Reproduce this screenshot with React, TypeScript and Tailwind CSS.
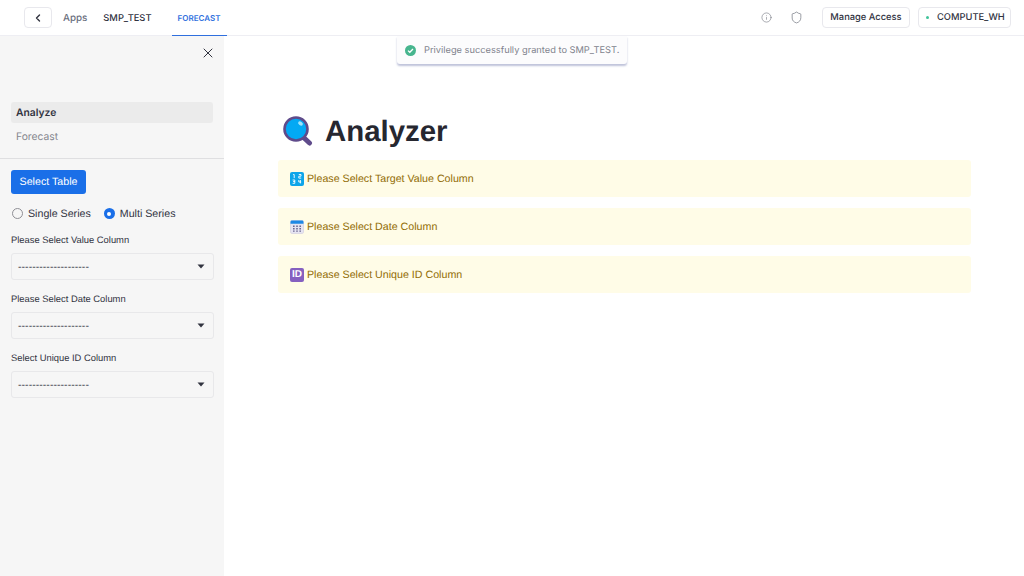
import React from "react";
import { ChevronLeft, X, Info, Shield } from "lucide-react";

const Arial = "font-['Liberation_Sans',Arial,sans-serif]";

function Caret() {
  return (
    <svg width="8" height="5" viewBox="0 0 8 5" className="shrink-0">
      <path d="M0.5 0.5h7L4 4.5z" fill="#31333f" />
    </svg>
  );
}

function SelectField({ label, pt }: { label: string; pt: string }) {
  return (
    <div className={pt}>
      <div className="h-[14px] text-[9.4px] leading-[14px] text-[#31333f]">{label}</div>
      <div className="mt-[6px] flex h-[27px] w-[203px] items-center justify-between rounded-[3px] border border-[#e8e8ea] bg-[#f6f6f6] pl-[6px] pr-[8px]">
        <span className="pt-[2px] text-[10.5px] tracking-[0.05px] text-[#31333f]">--------------------</span>
        <Caret />
      </div>
    </div>
  );
}

function Radio({ checked, label }: { checked?: boolean; label: string }) {
  return (
    <div className="flex items-center gap-[5px]">
      {checked ? (
        <span className="flex h-[11px] w-[11px] items-center justify-center rounded-full bg-[#1a6fe8]">
          <span className="h-[4px] w-[4px] rounded-full bg-white" />
        </span>
      ) : (
        <span className="h-[11px] w-[11px] rounded-full border border-[#8f8f95] bg-[#f6f6f6]" />
      )}
      <span className="text-[10.67px] leading-[14px] text-[#31333f]">{label}</span>
    </div>
  );
}

function Magnifier() {
  return (
    <svg width="30" height="30" viewBox="0 0 30 30" className="shrink-0">
      <path d="M19 20l7.5 7" stroke="#5f4b8b" strokeWidth="5" strokeLinecap="round" />
      <circle cx="13" cy="13" r="11.5" fill="#03a9f4" stroke="#5f4b8b" strokeWidth="2.6" />
      <ellipse cx="17.5" cy="7.5" rx="2.6" ry="1.8" fill="#9fe2fb" transform="rotate(35 17.5 7.5)" />
    </svg>
  );
}

function NumIcon() {
  return (
    <span className="flex h-[14px] w-[14px] shrink-0 items-center justify-center rounded-[2px] bg-[#0ea5e9]">
      <svg width="14" height="14" viewBox="0 0 14 14">
        <path d="M3.2 2.5h1v3.6M8.8 2.5h2.2v1.7H8.8v1.9h2.4M2.6 8h2.2v1.5H3.4h1.4v1.8H2.6M8.8 8v2h2.4M10.4 8v3.4" stroke="#fff" strokeWidth="0.9" fill="none" />
      </svg>
    </span>
  );
}

function CalIcon() {
  return (
    <svg width="14" height="14" viewBox="0 0 14 14" className="shrink-0">
      <rect x="0.5" y="0.5" width="13" height="13" rx="1.4" fill="#e6e4f2" stroke="#c9c5dd" strokeWidth="0.5" />
      <path d="M0.5 3.8V1.9A1.4 1.4 0 0 1 1.9 0.5h10.2a1.4 1.4 0 0 1 1.4 1.4v1.9z" fill="#1e88e5" />
      <path d="M3 5.6h1.6v1.4H3zM6.2 5.6h1.6v1.4H6.2zM9.4 5.6H11v1.4H9.4zM3 8h1.6v1.4H3zM6.2 8h1.6v1.4H6.2zM9.4 8H11v1.4H9.4zM3 10.4h1.6v1.4H3zM6.2 10.4h1.6v1.4H6.2zM9.4 10.4H11v1.4H9.4z" fill="#6b6790" />
    </svg>
  );
}

function IdIcon() {
  return (
    <span className={`flex h-[14px] w-[14px] shrink-0 items-center justify-center rounded-[2px] bg-[#8560c0] text-[10px] font-bold leading-none text-white ${Arial}`}>
      ID
    </span>
  );
}

function Alert({ icon, text, mt }: { icon: React.ReactNode; text: string; mt?: string }) {
  return (
    <div className={`flex h-[37px] items-center gap-[3px] rounded-[3px] bg-[#fffce7] pl-[12px] ${mt ?? ""}`}>
      {icon}
      <span className="text-[10.67px] leading-[14px] text-[#926c05]">{text}</span>
    </div>
  );
}

export default function App() {
  return (
    <div className="relative flex h-[576px] w-[1024px] flex-col overflow-hidden bg-white font-['Inter',sans-serif] [text-rendering:geometricPrecision]">
      <header className="flex h-[36px] shrink-0 items-stretch border-b border-[#eeeef3] bg-white">
        <div className="ml-[24px] mt-[7px] flex h-[21px] w-[28px] items-center justify-center rounded-[4px] border border-[#e8e8ed] bg-white">
          <ChevronLeft size={12} strokeWidth={2.8} color="#31333f" />
        </div>
        <span className="ml-[11px] flex items-center pt-[2px] text-[9.8px] font-medium leading-[12px] text-[#6b7080]">Apps</span>
        <span className="ml-[16px] flex items-center pt-[2px] text-[9.33px] font-medium leading-[12px] text-[#31333f]">SMP_TEST</span>
        <div className="-mb-px ml-[20px] flex w-[55px] items-center justify-center border-b border-[#2f6fde] text-[8px] font-semibold text-[#2f6fde]">
          FORECAST
        </div>
        <div className="ml-auto flex items-center">
          <Info size={11} strokeWidth={1.3} color="#71757f" />
          <Shield size={13} strokeWidth={1.3} color="#71757f" className="ml-[18px] mr-[1px]" />
          <div className="ml-[18px] flex h-[21px] w-[88px] items-center justify-center rounded-[4px] border border-[#e8e8ed] text-[9.33px] font-medium text-[#31333f]">
            Manage Access
          </div>
          <div className="ml-[8px] mr-[13px] flex h-[21px] w-[93px] items-center rounded-[4px] border border-[#e8e8ed] pl-[7px] text-[9.33px] font-medium text-[#31333f]">
            <span className="h-[3px] w-[3px] rounded-full bg-[#3fc39a]" />
            <span className="ml-[8px]">COMPUTE_WH</span>
          </div>
        </div>
      </header>

      <div className="flex min-h-0 flex-1">
        <aside className={`w-[224px] shrink-0 bg-[#f6f6f6] ${Arial}`}>
          <div className="flex h-[66px] justify-end pr-[8px] pt-[9px]">
            <X size={16} strokeWidth={1.5} color="#31333f" />
          </div>
          <div className="mx-[11px] flex h-[21px] items-center rounded-[3px] bg-[#ebebeb] pl-[5px] pt-[3px] font-['Inter',sans-serif] text-[10.3px] font-semibold text-[#31333f]">
            Analyze
          </div>
          <div className="ml-[16px] mt-[3px] flex h-[21px] items-center pt-[2px] font-['Inter',sans-serif] text-[10.3px] text-[#85868e]">
            Forecast
          </div>
          <div className="mt-[11px] border-t border-[#dfdfe1]" />
          <div className="px-[11px] pt-[11px]">
            <div className="flex h-[24px] w-[75px] items-center justify-center rounded-[3px] bg-[#1a6fe8] pb-[1px] text-[10.67px] text-white">
              Select Table
            </div>
            <div className="mt-[11px] flex h-[17px] items-center gap-[13px] pl-[1px]">
              <Radio label="Single Series" />
              <Radio checked label="Multi Series" />
            </div>
            <SelectField label="Please Select Value Column" pt="pt-[11px]" />
            <SelectField label="Please Select Date Column" pt="pt-[12px]" />
            <SelectField label="Select Unique ID Column" pt="pt-[12px]" />
          </div>
        </aside>

        <main className={`min-w-0 flex-1 pl-[54px] pr-[53px] pt-[80px] ${Arial}`}>
          <div className="ml-[5px] flex h-[30px] items-center gap-[12px]">
            <Magnifier />
            <h1 className="pt-[2px] text-[29.4px] font-bold leading-none text-[#262730]">Analyzer</h1>
          </div>
          <Alert icon={<NumIcon />} text="Please Select Target Value Column" mt="mt-[14px]" />
          <Alert icon={<CalIcon />} text="Please Select Date Column" mt="mt-[11px]" />
          <Alert icon={<IdIcon />} text="Please Select Unique ID Column" mt="mt-[11px]" />
        </main>
      </div>

      <div className="absolute left-[397px] top-[36px] flex h-[28px] w-[230px] items-center rounded-b-[3px] bg-[#fcfcfd] pl-[8px] shadow-[0_2px_2px_rgba(170,175,205,0.75)]">
        <svg width="11" height="11" viewBox="0 0 11 11" className="shrink-0">
          <circle cx="5.5" cy="5.5" r="5.5" fill="#47b58e" />
          <path d="M3 5.6l1.8 1.7L8 4" stroke="#fff" strokeWidth="1.3" fill="none" />
        </svg>
        <span className="ml-[8px] whitespace-nowrap pt-[2px] text-[9.27px] text-[#81838d]">Privilege successfully granted to SMP_TEST.</span>
      </div>
    </div>
  );
}
